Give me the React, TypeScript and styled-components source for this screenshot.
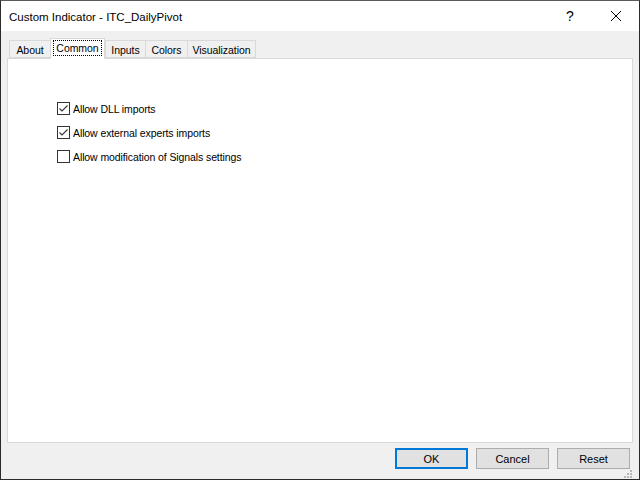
import React from "react";
import styled, { createGlobalStyle } from "styled-components";

const GlobalStyle = createGlobalStyle`
  html, body {
    margin: 0;
    padding: 0;
    background: #ffffff;
  }
  body {
    font-family: "Liberation Sans", Arial, sans-serif;
  }
`;

const Window = styled.div`
  display: flex;
  flex-flow: column nowrap;
  width: 640px;
  height: 480px;
  box-sizing: border-box;
  border: 1px solid #2b2b2b;
  border-top-color: #5a5a5a;
  background: #f0f0f0;
`;

const TitleBar = styled.div`
  display: flex;
  flex-flow: row nowrap;
  align-items: center;
  height: 30px;
  background: #ffffff;
  padding-left: 8px;
`;

const Title = styled.span`
  flex: 1;
  font-family: "Liberation Sans", Arial, sans-serif;
  font-size: 11.5px;
  color: #000;
  padding-top: 1px;
`;

const TitleBtn = styled.div`
  display: flex;
  align-items: center;
  justify-content: center;
  width: 46px;
  height: 30px;
  color: #000;
  font-family: "Liberation Sans", Arial, sans-serif;
  font-size: 14px;
`;

const Body = styled.div`
  display: flex;
  flex-flow: column nowrap;
  flex: 1;
  padding: 7px 6px 0 6px;
`;

const TabStrip = styled.div`
  display: flex;
  flex-flow: row nowrap;
  align-items: flex-end;
  height: 20px;
  padding-left: 2px;
  position: relative;
  z-index: 1;
`;

const Tab = styled.div<{ $active?: boolean; $w: number }>`
  box-sizing: border-box;
  width: ${(p) => p.$w}px;
  height: ${(p) => (p.$active ? 21 : 18)}px;
  margin-bottom: ${(p) => (p.$active ? "-1px" : "0")};
  display: flex;
  align-items: center;
  justify-content: center;
  background: ${(p) => (p.$active ? "#ffffff" : "#f0f0f0")};
  border: 1px solid #d9d9d9;
  border-bottom: ${(p) => (p.$active ? "none" : "1px solid #d9d9d9")};
  border-right: ${(p) => (p.$active ? "1px solid #d9d9d9" : "none")};
  font-size: 10.5px;
  letter-spacing: -0.05px;
  color: #000;
  padding-top: ${(p) => (p.$active ? "0" : "1px")};
  padding-bottom: ${(p) => (p.$active ? "2px" : "0")};
  z-index: ${(p) => (p.$active ? 2 : 0)};
  &:last-child {
    border-right: 1px solid #d9d9d9;
  }
`;

const Focus = styled.span`
  outline: 1px dotted #000;
  outline-offset: 0;
  padding: 0 2px 0 2px;
  line-height: 14px;
`;

const Panel = styled.div`
  flex: 0 0 385px;
  box-sizing: border-box;
  background: #ffffff;
  border: 1px solid #d9d9d9;
  padding: 43px 0 0 49px;
  display: flex;
  flex-flow: column nowrap;
  gap: 11px;
`;

const CheckRow = styled.label`
  display: flex;
  flex-flow: row nowrap;
  align-items: center;
  gap: 3px;
  height: 13px;
  font-size: 10.5px;
  letter-spacing: -0.1px;
  color: #000;
`;

const Box = styled.span`
  box-sizing: border-box;
  width: 13px;
  height: 13px;
  border: 1px solid #333333;
  background: #ffffff;
  display: flex;
  align-items: center;
  justify-content: center;
`;

const Footer = styled.div`
  display: flex;
  flex-flow: row nowrap;
  justify-content: flex-end;
  gap: 8px;
  padding: 5px 3px 0 0;
  position: relative;
  flex: 1;
`;

const Button = styled.div<{ $default?: boolean }>`
  box-sizing: border-box;
  width: 73px;
  height: 21px;
  display: flex;
  align-items: center;
  justify-content: center;
  background: #e1e1e1;
  border: ${(p) => (p.$default ? "2px solid #0078d7" : "1px solid #adadad")};
  font-size: 11px;
  color: #000;
`;

const Grip = styled.svg`
  position: absolute;
  right: 1px;
  bottom: 1px;
`;

const Check = ({ checked, label }: { checked: boolean; label: string }) => (
  <CheckRow>
    <Box>
      {checked && (
        <svg width="11" height="11" viewBox="0 0 11 11">
          <polyline points="1.5,5.5 4,8 9.5,2.5" fill="none" stroke="#333" strokeWidth="1.1" />
        </svg>
      )}
    </Box>
    {label}
  </CheckRow>
);

const tabs = [
  { label: "About", w: 41 },
  { label: "Common", w: 55, active: true },
  { label: "Inputs", w: 40 },
  { label: "Colors", w: 42 },
  { label: "Visualization", w: 69 },
];

export default function App() {
  return (
    <>
      <GlobalStyle />
      <Window>
        <TitleBar>
          <Title>Custom Indicator - ITC_DailyPivot</Title>
          <TitleBtn>?</TitleBtn>
          <TitleBtn>
            <svg width="12" height="12" viewBox="0 0 12 12">
              <path d="M1 1 L11 11 M11 1 L1 11" stroke="#000" strokeWidth="1" fill="none" />
            </svg>
          </TitleBtn>
        </TitleBar>
        <Body>
          <TabStrip>
            {tabs.map((t) => (
              <Tab key={t.label} $active={t.active} $w={t.w}>
                {t.active ? <Focus>{t.label}</Focus> : t.label}
              </Tab>
            ))}
          </TabStrip>
          <Panel>
            <Check checked label="Allow DLL imports" />
            <Check checked label="Allow external experts imports" />
            <Check checked={false} label="Allow modification of Signals settings" />
          </Panel>
          <Footer>
            <Button $default>OK</Button>
            <Button>Cancel</Button>
            <Button>Reset</Button>
            <Grip width="10" height="10" viewBox="0 0 10 10">
              {[
                [8, 2],
                [5, 5],
                [8, 5],
                [2, 8],
                [5, 8],
                [8, 8],
              ].map(([x, y]) => (
                <rect key={`${x}-${y}`} x={x} y={y} width="2" height="2" fill="#b8b8b8" />
              ))}
            </Grip>
          </Footer>
        </Body>
      </Window>
    </>
  );
}
